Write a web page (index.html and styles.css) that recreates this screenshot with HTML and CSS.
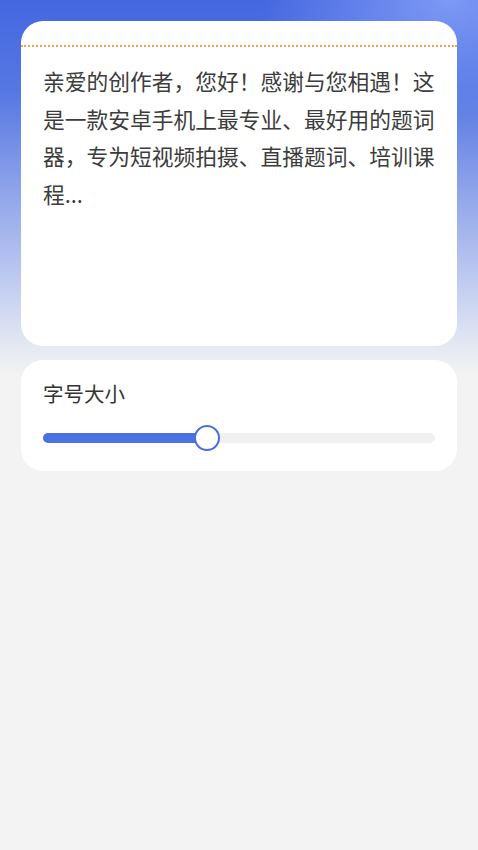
FILE: index.html
```html
<!DOCTYPE html>
<html lang="zh">
<head>
<meta charset="utf-8">
<link rel="stylesheet" href="styles.css">
</head>
<body>
<div class="page">
  <div class="card preview">
    <div class="dots"></div>
    <p class="text">亲爱的创作者，您好！感谢与您相遇！这是一款安卓手机上最专业、最好用的题词器，专为短视频拍摄、直播题词、培训课程...</p>
  </div>
  <div class="card size">
    <div class="label">字号大小</div>
    <div class="slider">
      <div class="fill" style="width:41.8%"></div>
      <div class="thumb" style="left:41.8%"></div>
    </div>
  </div>
</div>
</body>
</html>
```
FILE: styles.css
```css
html, body {
  margin: 0;
  padding: 0;
}
body {
  width: 478px;
  height: 850px;
  background-color: #f3f3f3;
  background-image:
    radial-gradient(ellipse 190px 120px at 450px 0px, rgba(140,165,250,0.8), rgba(140,165,250,0) 100%),
    linear-gradient(180deg, #4467e0 0px, #5577e3 90px, #8ea3ea 190px, #c4cff1 290px, #e4e8f3 345px, #f3f3f3 375px);
  background-repeat: no-repeat;
  font-family: "Noto Sans CJK SC", "Noto Sans", sans-serif;
  color: #333;
}
.page {
  padding: 21px 21px 0 21px;
  display: flex;
  flex-direction: column;
  gap: 14px;
}
.card {
  background: #fff;
  border-radius: 22px;
}
.preview {
  height: 325px;
  padding-top: 24px;
  box-sizing: border-box;
}
.dots {
  height: 0;
  border-top: 2px dotted #f0a050;
}
.text {
  margin: 0;
  padding: 15px 22px 0 22px;
  font-size: 21.75px;
  line-height: 37.7px;
  color: #3c3c3c;
}
.size {
  height: 111px;
  box-sizing: border-box;
  padding: 19px 22px 0 22px;
}
.label {
  font-size: 20.5px;
  line-height: 28px;
  color: #333;
}
.slider {
  position: relative;
  margin-top: 26px;
  height: 10px;
  border-radius: 5px;
  background: #f0f0f0;
}
.fill {
  height: 10px;
  border-radius: 5px;
  background: #4a70e2;
}
.thumb {
  position: absolute;
  top: 50%;
  width: 22px;
  height: 22px;
  border: 2.5px solid #4a6ee0;
  border-radius: 50%;
  background: #fff;
  transform: translate(-50%, -50%);
}
```
